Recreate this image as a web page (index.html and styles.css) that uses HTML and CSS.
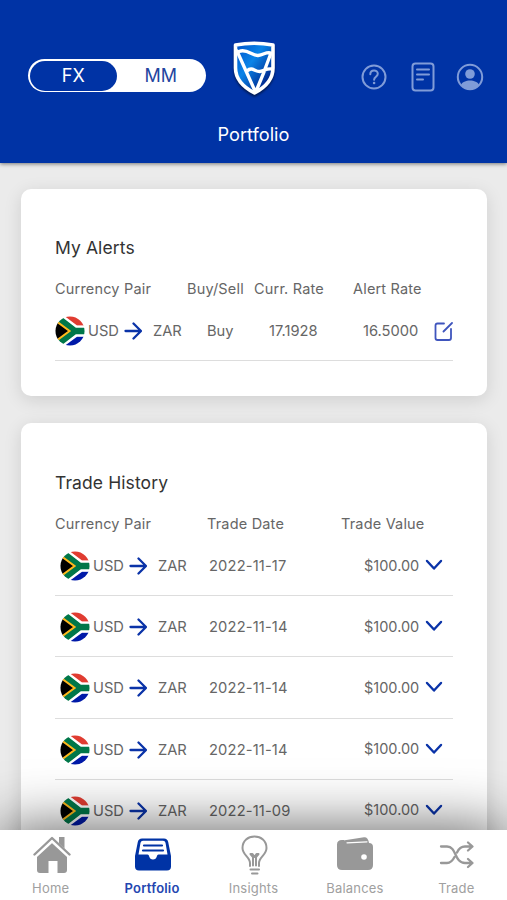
FILE: index.html
```
<!DOCTYPE html>
<html lang="en">
<head>
    <meta charset="UTF-8">
    <meta name="viewport" content="width=device-width, initial-scale=1.0">
    <title>Portfolio</title>
    <link rel="stylesheet" href="styles.css">
</head>
<body>
    <!-- shared icons -->
    <svg class="sprite" width="0" height="0">
        <defs>
            <linearGradient id="shieldFill" x1="0" y1="0" x2="1" y2="1">
                <stop offset="0" stop-color="#0050c8"/>
                <stop offset="0.4" stop-color="#0a84e8"/>
                <stop offset="0.8" stop-color="#002a90"/>
            </linearGradient>
            <clipPath id="round"><circle cx="16" cy="16" r="15.5"/></clipPath>
            <symbol id="flag" viewBox="0 0 32 32">
                <g clip-path="url(#round)">
                    <path fill="#fff" d="M0 0h32v32H0z"/>
                    <path fill="#e03c31" d="M10 0h22v10H23.500z"/>
                    <path fill="#001aa8" d="M10 32h22V22H23.500z"/>
                    <path fill="none" stroke="#fff" stroke-width="11" d="M-1-1l22 17L-1 33M21 16h13"/>
                    <path fill="none" stroke="#007749" stroke-width="7" d="M-1-1l22 17L-1 33M20 16h14"/>
                    <path fill="#000" stroke="#ffb81c" stroke-width="2.200" d="M-2 3L15.500 16L-2 29z"/>
                </g>
            </symbol>
            <symbol id="arrow" viewBox="0 0 18 18">
                <path fill="none" stroke="#0a33a8" stroke-width="2.300" stroke-linecap="round" stroke-linejoin="round" d="M1.500 9h15M9.500 1.500L17 9l-7.500 7.500"/>
            </symbol>
            <symbol id="chevron" viewBox="0 0 18 12">
                <path fill="none" stroke="#0a33a8" stroke-width="2.400" stroke-linecap="round" stroke-linejoin="round" d="M2 2l7 7.500L16 2"/>
            </symbol>
        </defs>
    </svg>

    <header class="header">
        <div class="topbar">
            <div class="toggle">
                <span class="toggle-item active">FX</span>
                <span class="toggle-item">MM</span>
            </div>
            <svg class="logo" width="50" height="60" viewBox="0 0 50 60">
                <path fill="url(#shieldFill)" stroke="#fff" stroke-width="3.600" stroke-linejoin="round" d="M5.500 6Q24 2.500 43 6V29C43 42 34 49 24.500 54C15 49 5.500 42 5.500 29z"/>
                <path fill="none" stroke="#fff" stroke-width="3.300" stroke-linejoin="round" stroke-linecap="round" d="M7 12L25 52M9 12.500C17 9 22 17 28 16.500S36 12.500 41 14L35 30M17 32C22 27 25 33 30 32.500S36 29 42 30M34 33L27 50"/>
            </svg>
            <div class="actions">
                <svg width="26" height="26" viewBox="0 0 26 26">
                    <circle cx="13" cy="13" r="11.500"/>
                    <path d="M9.300 10.200c0-5 7.500-5 7.500-.4c0 3-3.700 3-3.700 6"/>
                    <circle class="solid" cx="13.100" cy="19" r="1.300"/>
                </svg>
                <svg width="24" height="30" viewBox="0 0 24 30">
                    <rect x="1.500" y="1.500" width="21" height="27" rx="3"/>
                    <path d="M6 7.500h12M6 12.500h12M6 17.500h6"/>
                </svg>
                <svg width="28" height="28" viewBox="0 0 28 28">
                    <circle cx="14" cy="14" r="12.200"/>
                    <circle class="solid" cx="14" cy="11" r="4.800"/>
                    <path class="solid" d="M5 22c2-6 16-6 18 0c-4 6-14 6-18 0z"/>
                </svg>
            </div>
        </div>
        <h1>Portfolio</h1>
    </header>

    <main class="content">
        <section class="card alerts">
            <h2>My Alerts</h2>
            <div class="row head">
                <span>Currency Pair</span>
                <span>Buy/Sell</span>
                <span>Curr. Rate</span>
                <span>Alert Rate</span>
            </div>
            <div class="row item">
                <div class="pair">
                    <svg class="flag"><use href="#flag"/></svg>
                    <span class="from">USD</span>
                    <svg class="arrow"><use href="#arrow"/></svg>
                    <span class="to">ZAR</span>
                </div>
                <span class="side">Buy</span>
                <span class="rate">17.1928</span>
                <div class="alert-rate">
                    <span>16.5000</span>
                    <svg width="20" height="20" viewBox="0 0 20 20">
                        <path fill="none" stroke="#3f55bd" stroke-width="1.800" stroke-linecap="round" d="M11 2.500H4.500Q2.500 2.500 2.500 4.500V17Q2.500 19 4.500 19H16Q18 19 18 17V8M10.500 10.500L19 2"/>
                    </svg>
                </div>
            </div>
        </section>

        <section class="card trades">
            <h2>Trade History</h2>
            <div class="row head">
                <span>Currency Pair</span>
                <span>Trade Date</span>
                <span>Trade Value</span>
            </div>
            <div class="row item">
                <div class="pair">
                    <svg class="flag"><use href="#flag"/></svg>
                    <span class="from">USD</span>
                    <svg class="arrow"><use href="#arrow"/></svg>
                    <span class="to">ZAR</span>
                </div>
                <span class="date">2022-11-17</span>
                <div class="value"><span>$100.00</span><svg class="chevron"><use href="#chevron"/></svg></div>
            </div>
            <div class="row item">
                <div class="pair">
                    <svg class="flag"><use href="#flag"/></svg>
                    <span class="from">USD</span>
                    <svg class="arrow"><use href="#arrow"/></svg>
                    <span class="to">ZAR</span>
                </div>
                <span class="date">2022-11-14</span>
                <div class="value"><span>$100.00</span><svg class="chevron"><use href="#chevron"/></svg></div>
            </div>
            <div class="row item">
                <div class="pair">
                    <svg class="flag"><use href="#flag"/></svg>
                    <span class="from">USD</span>
                    <svg class="arrow"><use href="#arrow"/></svg>
                    <span class="to">ZAR</span>
                </div>
                <span class="date">2022-11-14</span>
                <div class="value"><span>$100.00</span><svg class="chevron"><use href="#chevron"/></svg></div>
            </div>
            <div class="row item">
                <div class="pair">
                    <svg class="flag"><use href="#flag"/></svg>
                    <span class="from">USD</span>
                    <svg class="arrow"><use href="#arrow"/></svg>
                    <span class="to">ZAR</span>
                </div>
                <span class="date">2022-11-14</span>
                <div class="value"><span>$100.00</span><svg class="chevron"><use href="#chevron"/></svg></div>
            </div>
            <div class="row item">
                <div class="pair">
                    <svg class="flag"><use href="#flag"/></svg>
                    <span class="from">USD</span>
                    <svg class="arrow"><use href="#arrow"/></svg>
                    <span class="to">ZAR</span>
                </div>
                <span class="date">2022-11-09</span>
                <div class="value"><span>$100.00</span><svg class="chevron"><use href="#chevron"/></svg></div>
            </div>
        </section>
    </main>

    <nav class="tabbar">
        <a class="tab">
            <svg width="40" height="40" viewBox="-1 0 40 40">
                <path fill="#989898" d="M20 6.500L35 20V35Q35 38 32 38H25.500V26H16.500V38H8Q5 38 5 35V20z"/>
                <path fill="#989898" d="M27 2h5.500v12L27 9z"/>
                <path fill="none" stroke="#fff" stroke-width="4.500" d="M1 22.500L20 5l19 17.500"/>
                <path fill="none" stroke="#989898" stroke-width="2.400" stroke-linecap="round" stroke-linejoin="round" d="M2.500 19.500L20 3l17.500 16.500"/>
            </svg>
            <span>Home</span>
        </a>
        <a class="tab current">
            <svg width="40" height="40" viewBox="-1 0 40 40">
                <path fill="#0033a5" d="M9 3.500h22q3.500 0 4.200 3.500L38 21v10.500q0 4-4 4H6q-4 0-4-4V21L4.800 7Q5.500 3.500 9 3.500z"/>
                <path fill="#fff" d="M10 5.800h20q2 0 2.500 2L34.500 19.500H25.500q-1.500 0-1.500 1.500q-1 3.500-4 3.500T16 21q0-1.500-1.500-1.500H5.500L7.500 7.800q.5-2 2.500-2z"/>
                <path stroke="#0033a5" stroke-width="2.200" stroke-linecap="round" d="M11 10.500h18M10 15.500h20"/>
            </svg>
            <span>Portfolio</span>
        </a>
        <a class="tab">
            <svg width="40" height="40" viewBox="0 0 40 40">
                <g fill="none" stroke="#989898" stroke-width="2" stroke-linecap="round" stroke-linejoin="round">
                    <path d="M16 31V28C16 22 8.500 20 8.500 13C8.500 5.500 14 1.500 20.500 1.500S32.500 5.500 32.500 13C32.500 20 25 22 25 28V31M19 30.500V22L16.500 19h2l2 3l2-3h2L22 22V30.500M16.500 34.500h8.500M18 38.500h5.500"/>
                </g>
            </svg>
            <span>Insights</span>
        </a>
        <a class="tab">
            <svg width="40" height="40" viewBox="0 0 40 40">
                <path fill="#989898" d="M5 6L29 2.200Q33 1.800 34 8H5z"/>
                <path fill="#989898" d="M2 9.500q0-4.500 5-4.500h2v3h25q4 0 4 4v18q0 5-5 5H7q-5 0-5-5z"/>
                <path stroke="#fff" stroke-width="1.200" stroke-linecap="round" d="M12 7.800L32 6.800"/>
                <circle fill="#fff" cx="29" cy="22" r="2.800"/>
            </svg>
            <span>Balances</span>
        </a>
        <a class="tab">
            <svg width="40" height="40" viewBox="0 0 40 40">
                <path fill="none" stroke="#989898" stroke-width="2.300" stroke-linecap="round" stroke-linejoin="round" d="M5 11.500h6C21 11.500 18 28 29 28h7M5 28h6C15 28 17 25 18.500 22M21 17.500C23 13 25 11.500 29 11.500h7M32 7.500L36.500 11.500l-4.500 4M32 24l4.500 4l-4.500 4"/>
            </svg>
            <span>Trade</span>
        </a>
    </nav>
</body>
</html>
```

FILE: styles.css
```
* {
    box-sizing: border-box;
}

body {
    display: flex;
    flex-direction: column;
    height: 900px;
    margin: 0;
    overflow: hidden;
    background: #ebebeb;
    color: #666;
    font-family: Inter, "Liberation Sans", sans-serif;
    font-size: 14.7px;
}

h1, h2 {
    margin: 0;
    font-weight: 400;
}

.sprite {
    position: absolute;
}

.header {
    flex: none;
    height: 163px;
    padding: 39px 23px 0 28px;
    background: #0033a5;
    box-shadow: 0 1px 4px rgba(0, 0, 0, 0.5);
    color: #fff;
    z-index: 1;
}

.topbar {
    display: flex;
    align-items: center;
    height: 74px;
}

.toggle {
    display: flex;
    width: 178px;
    height: 33px;
    margin-top: -1px;
    padding: 1.5px;
    border-radius: 17px;
    background: #fff;
}

.toggle-item {
    display: flex;
    flex: 1;
    align-items: center;
    justify-content: center;
    border-radius: 15px;
    color: #2445a0;
    font-size: 18px;
}

.toggle-item.active {
    background: #0033a5;
    color: #fff;
}

.logo {
    margin: -15px 0 0 24px;
    filter: drop-shadow(0 2px 1px rgba(0, 0, 0, 0.5));
}

.actions {
    display: flex;
    flex: 1;
    align-items: center;
    justify-content: flex-end;
    gap: 24px;
    margin-top: 1px;
}

.actions svg {
    fill: none;
    stroke: #809cd8;
    stroke-width: 2;
    stroke-linecap: round;
}

.actions svg:last-child {
    margin-left: -3px;
}

.actions .solid {
    fill: #809cd8;
    stroke: none;
}

.header h1 {
    margin-top: 9px;
    padding-right: 5px;
    font-size: 18.2px;
    line-height: 24px;
    text-align: center;
}

.content {
    flex: 1;
    min-height: 0;
    padding: 26px 20px 0 21px;
    overflow: hidden;
}

.card {
    height: 207px;
    margin-bottom: 27px;
    padding: 48px 34px 0;
    border-radius: 10px;
    background: #fff;
    box-shadow: 0 4px 18px rgba(0, 0, 0, 0.12);
}

.card h2 {
    color: #333;
    font-size: 17.5px;
    line-height: 22px;
    letter-spacing: 0.1px;
}

.row {
    display: grid;
    align-items: center;
    white-space: nowrap;
}

.alerts .row {
    grid-template-columns: 132px 67px 99px 100px;
}

.trades .row {
    grid-template-columns: 152px 134px 112px;
}

.head {
    height: 20px;
    margin-top: 19px;
    font-size: 14.5px;
    letter-spacing: 0.18px;
}

.item {
    border-bottom: 1px solid #ddd;
}

.alerts .item {
    height: 63px;
    padding-top: 3px;
}

.trades {
    height: 500px;
    margin-bottom: 0;
    padding-top: 49px;
}

.trades .head + .item {
    margin-top: 2px;
}

.trades .item {
    height: 61.2px;
    padding-top: 2px;
}

.pair {
    display: flex;
    align-items: center;
}

.trades .pair {
    padding-left: 5px;
}

.flag {
    width: 30px;
    height: 32px;
}

.from {
    width: 32px;
    margin-left: 3px;
}

.arrow {
    width: 18px;
    height: 18px;
    margin-left: 4px;
}

.to {
    margin-left: 11px;
}

.side {
    padding-left: 20px;
}

.rate {
    padding-left: 15px;
}

.alert-rate {
    display: flex;
    align-items: center;
    justify-content: space-between;
    padding-left: 10px;
}

.date {
    padding-left: 2px;
    letter-spacing: 0.15px;
}

.value {
    display: flex;
    align-items: center;
    gap: 6px;
    padding: 0 0 2px 23px;
    font-size: 14.5px;
}

.chevron {
    width: 18px;
    height: 12px;
}

.tabbar {
    display: flex;
    flex: none;
    height: 70px;
    padding-top: 5px;
    background: #fff;
    box-shadow: 0 0 60px rgba(0, 0, 0, 0.66);
    z-index: 1;
}

.tab {
    display: flex;
    flex: 1;
    flex-direction: column;
    align-items: center;
    color: #a0a0a0;
    font-size: 13px;
    letter-spacing: 0.2px;
}

.tab span {
    line-height: 16px;
    margin-top: 5px;
}

.tab.current {
    color: #2446b0;
    font-weight: 600;
}
```
